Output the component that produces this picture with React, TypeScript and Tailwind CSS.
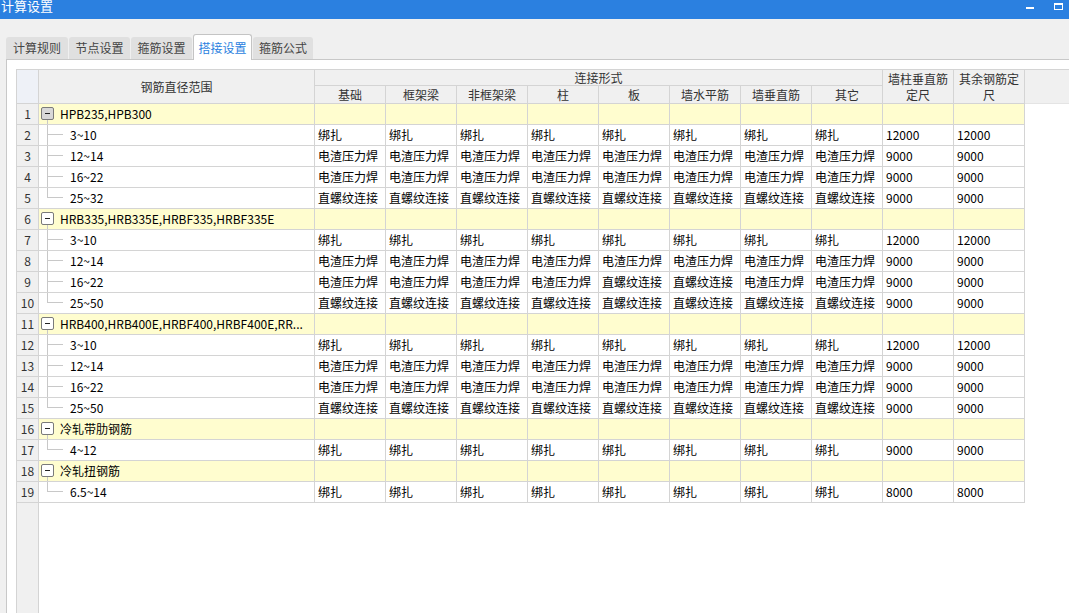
import React from "react";

const COLS = ["基础", "框架梁", "非框架梁", "柱", "板", "墙水平筋", "墙垂直筋", "其它"];

type Row =
  | { kind: "group"; label: string; first?: boolean }
  | { kind: "child"; label: string; cells: string[]; last?: boolean };

const B = "绑扎";
const D = "电渣压力焊";
const Z = "直螺纹连接";

const r8 = (v: string) => [v, v, v, v, v, v, v, v];

const ROWS: Row[] = [
  { kind: "group", label: "HPB235,HPB300", first: true },
  { kind: "child", label: "3~10", cells: [...r8(B), "12000", "12000"] },
  { kind: "child", label: "12~14", cells: [...r8(D), "9000", "9000"] },
  { kind: "child", label: "16~22", cells: [...r8(D), "9000", "9000"] },
  { kind: "child", label: "25~32", cells: [...r8(Z), "9000", "9000"], last: true },
  { kind: "group", label: "HRB335,HRB335E,HRBF335,HRBF335E" },
  { kind: "child", label: "3~10", cells: [...r8(B), "12000", "12000"] },
  { kind: "child", label: "12~14", cells: [...r8(D), "9000", "9000"] },
  { kind: "child", label: "16~22", cells: [D, D, D, D, Z, Z, D, D, "9000", "9000"] },
  { kind: "child", label: "25~50", cells: [...r8(Z), "9000", "9000"], last: true },
  { kind: "group", label: "HRB400,HRB400E,HRBF400,HRBF400E,RR..." },
  { kind: "child", label: "3~10", cells: [...r8(B), "12000", "12000"] },
  { kind: "child", label: "12~14", cells: [...r8(D), "9000", "9000"] },
  { kind: "child", label: "16~22", cells: [...r8(D), "9000", "9000"] },
  { kind: "child", label: "25~50", cells: [...r8(Z), "9000", "9000"], last: true },
  { kind: "group", label: "冷轧带肋钢筋" },
  { kind: "child", label: "4~12", cells: [...r8(B), "9000", "9000"], last: true },
  { kind: "group", label: "冷轧扭钢筋" },
  { kind: "child", label: "6.5~14", cells: [...r8(B), "8000", "8000"], last: true },
];

function TreeLine({ last }: { last?: boolean }) {
  return (
    <svg width="31" height="20" className="shrink-0">
      <line x1="8.5" y1="0" x2="8.5" y2={last ? 10 : 20} stroke="#c8c8c8" strokeWidth="1" />
      <line x1="8" y1="9.5" x2="24" y2="9.5" stroke="#c8c8c8" strokeWidth="1" />
    </svg>
  );
}

function Tab({ label, active, w }: { label: string; active?: boolean; w: string }) {
  if (active) {
    return (
      <div
        className={`${w} relative z-10 -mb-px h-[26px] bg-white border border-b-0 border-[#c4c4c4] rounded-t-[3px] flex items-center justify-center text-[12px] text-[#2b7fe0]`}
      >
        {label}
      </div>
    );
  }
  return (
    <div
      className={`${w} h-[22px] bg-[#e0e0e0] rounded-t-[3px] flex items-center justify-center text-[12px] text-[#444]`}
    >
      {label}
    </div>
  );
}

export default function App() {
  return (
    <div className="w-[1069px] h-[613px] overflow-hidden bg-[#f0f0f0] flex flex-col font-['Noto_Sans_CJK_SC','Microsoft_YaHei',sans-serif] text-black">
      {/* Title bar */}
      <div className="h-[19px] shrink-0 bg-[#2b80e0] flex items-start relative">
        <div className="pl-[1px] -mt-[2px] text-[13px] leading-[16px] text-white">计算设置</div>
        <div className="flex-1" />
        <div className="w-[8px] h-[2px] bg-white mt-[7px] mr-[20px]" />
        <div className="w-[9px] h-[7px] border border-white border-t-2 mt-[3px] mr-[6px]" />
      </div>

      {/* Tabs */}
      <div className="h-[40px] shrink-0 flex items-end gap-[1px] pl-[6px]">
        <Tab label="计算规则" w="w-[62px]" />
        <Tab label="节点设置" w="w-[61px]" />
        <Tab label="箍筋设置" w="w-[61px]" />
        <Tab label="搭接设置" w="w-[59px]" active />
        <Tab label="箍筋公式" w="w-[60px]" />
      </div>

      {/* Panel */}
      <div className="flex-1 ml-[6px] bg-white border-l border-t border-[#c8c8c8] pl-[9px] pt-[9px] flex flex-col min-h-0">
        <div className="flex-1 flex flex-col border-l border-t border-[#d4d4d4] min-h-0">
          {/* Header */}
          <div className="flex shrink-0 text-[12px] text-[#333]">
            <div className="w-[22px] h-[34px] bg-[#eef1f7] border-r border-b border-[#d4d4d4]" />
            <div className="w-[276px] h-[34px] bg-[#f0f0f0] border-r border-b border-[#d4d4d4] flex items-center justify-center">
              钢筋直径范围
            </div>
            <div className="flex flex-col">
              <div className="w-[568px] h-[16px] bg-[#f0f0f0] border-r border-b border-[#d4d4d4] flex items-center justify-center leading-[15px]">
                连接形式
              </div>
              <div className="flex">
                {COLS.map((c) => (
                  <div
                    key={c}
                    className="w-[71px] h-[18px] bg-[#f0f0f0] border-r border-b border-[#d4d4d4] flex items-center justify-center leading-[17px]"
                  >
                    {c}
                  </div>
                ))}
              </div>
            </div>
            <div className="w-[71px] h-[34px] bg-[#f0f0f0] border-r border-b border-[#d4d4d4] flex flex-col items-center justify-center leading-[16px]">
              <span>墙柱垂直筋</span>
              <span>定尺</span>
            </div>
            <div className="w-[71px] h-[34px] bg-[#f0f0f0] border-r border-b border-[#d4d4d4] flex flex-col items-center justify-center leading-[16px]">
              <span>其余钢筋定</span>
              <span>尺</span>
            </div>
            <div className="flex-1 h-[34px] bg-[#f0f0f0] border-b border-[#e4e4e4]" />
          </div>

          {/* Body */}
          {ROWS.map((r, i) => {
            const n = i + 1;
            if (r.kind === "group") {
              return (
                <div key={n} className="flex shrink-0 text-[12px] leading-[20px]">
                  <div className="w-[22px] h-[21px] bg-[#f0f0f0] border-r border-b border-[#d4d4d4] text-center text-[#333]">
                    {n}
                  </div>
                  <div className="w-[276px] h-[21px] bg-[#fffdcf] border-r border-b border-[#d4d4d4] flex items-start">
                    <div className="ml-[2px] w-[13px] h-[20px] flex flex-col items-start">
                      <div
                        className={`mt-[3px] w-[13px] h-[13px] shrink-0 rounded-[2px] border border-[#7a7a7a] flex items-center justify-center ${
                          r.first ? "bg-[#d8d8d8]" : "bg-white"
                        }`}
                      >
                        <div className="w-[5px] h-px bg-[#222]" />
                      </div>
                      <div className="ml-[6px] w-px flex-1 bg-[#c8c8c8]" />
                    </div>
                    <span className="ml-[6px] whitespace-nowrap">{r.label}</span>
                  </div>
                  {Array.from({ length: 10 }).map((_, k) => (
                    <div key={k} className="w-[71px] h-[21px] bg-[#fffdcf] border-r border-b border-[#d4d4d4]" />
                  ))}
                </div>
              );
            }
            return (
              <div key={n} className="flex shrink-0 text-[12px] leading-[20px]">
                <div className="w-[22px] h-[21px] bg-[#f0f0f0] border-r border-b border-[#d4d4d4] text-center text-[#333]">
                  {n}
                </div>
                <div className="w-[276px] h-[21px] bg-white border-r border-b border-[#d4d4d4] flex items-start">
                  <TreeLine last={r.last} />
                  <span className="whitespace-nowrap">{r.label}</span>
                </div>
                {r.cells.map((c, k) => (
                  <div
                    key={k}
                    className="w-[71px] h-[21px] bg-white border-r border-b border-[#d4d4d4] pl-[3px] whitespace-nowrap overflow-hidden"
                  >
                    {c}
                  </div>
                ))}
              </div>
            );
          })}

          {/* Filler */}
          <div className="flex-1 flex min-h-0">
            <div className="w-[22px] bg-[#f0f0f0] border-r border-[#d4d4d4]" />
          </div>
        </div>
      </div>
    </div>
  );
}
